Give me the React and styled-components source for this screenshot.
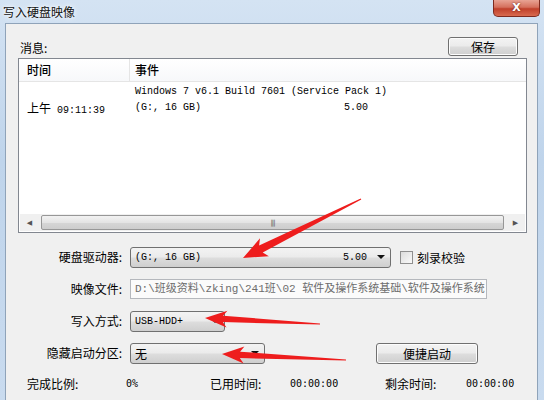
import React from "react"
import styled, { createGlobalStyle } from "styled-components"

const Global = createGlobalStyle`
  html, body { margin: 0; padding: 0; background: #c6d9ee; }
  body { font-family: "Noto Sans CJK SC", "Liberation Sans", sans-serif; font-size: 12px; color: #000; }
`

const Win = styled.div`
  position: relative;
  width: 544px;
  height: 400px;
  overflow: hidden;
  display: flex;
  flex-direction: column;
  background: linear-gradient(180deg, #d4e3f3 0%, #bfd4eb 40%, #c9dbef 100%);
`

const TitleBar = styled.div`
  height: 23px;
  display: flex;
  justify-content: space-between;
  align-items: flex-start;
  padding: 0 4px 0 3px;
  box-sizing: border-box;
`

const Title = styled.div`
  line-height: 23px;
  font-size: 12px;
  color: #111;
  text-shadow: 0 0 6px #fff, 0 0 3px #fff;
`

const CloseBtn = styled.div`
  width: 47px;
  height: 17px;
  box-sizing: border-box;
  border: 1px solid #7d2a1f;
  border-top: none;
  border-radius: 0 0 5px 5px;
  background: linear-gradient(180deg, #e8a394 0%, #d5705d 45%, #c0402b 55%, #d86a4f 100%);
  color: #fff;
  font-family: "DejaVu Sans", sans-serif;
  font-weight: bold;
  font-size: 11px;
  text-align: center;
  line-height: 15px;
  text-shadow: 0 0 2px #5a1a10;
`

const Body = styled.div`
  flex: 1;
  margin: 0 6px 0 5px;
  border: 1px solid #8fa3b9;
  border-bottom: none;
  background: #f0f0f0;
  padding: 0 10px 0 12px;
  display: flex;
  flex-direction: column;
`

const TopRow = styled.div`
  height: 34px;
  display: flex;
  justify-content: space-between;
  align-items: flex-end;
`

const MsgLabel = styled.div`
  margin: 0 0 2px 2px;
  line-height: 16px;
`

const Button = styled.div`
  width: ${p => p.$w}px;
  height: ${p => p.$h || 19}px;
  box-sizing: border-box;
  border: 1px solid #707070;
  border-radius: 3px;
  background: linear-gradient(180deg, #f3f3f3 0%, #ebebeb 48%, #dddddd 52%, #cfcfcf 100%);
  box-shadow: inset 0 0 0 1px #fcfcfc;
  text-align: center;
  line-height: ${p => (p.$h || 19) - 2}px;
  margin: ${p => p.$m || "0"};
  font-size: 12px;
`

const List = styled.div`
  height: 175px;
  box-sizing: border-box;
  border: 1px solid #828790;
  background: #fff;
  display: flex;
  flex-direction: column;
`

const ListHead = styled.div`
  height: 22px;
  display: grid;
  grid-template-columns: 111px 1fr;
  border-bottom: 1px solid #e5e5e5;
  background: linear-gradient(180deg, #ffffff 0%, #f7f8fa 100%);
`

const HeadCell = styled.div`
  padding-left: ${p => p.$pl}px;
  line-height: 22px;
  font-weight: 500;
  border-right: ${p => (p.$sep ? "1px solid #e5e5e5" : "none")};
`

const Rows = styled.div`
  flex: 1;
  display: grid;
  grid-template-columns: 111px 1fr;
  grid-template-rows: 16px 16px;
  align-content: start;
  padding-top: 2px;
  font-family: "Liberation Mono", monospace;
  font-size: 10px;
`

const TimeCell = styled.div`
  padding-left: 8px;
  line-height: 16px;
  grid-row: 2;
  white-space: nowrap;
  span { font-family: "Noto Sans CJK SC", sans-serif; font-size: 12px; margin-right: 6px; }
`

const EventCell = styled.div`
  padding-left: 5px;
  line-height: 16px;
  white-space: pre;
  display: flex;
  grid-column: 2;
`

const EvFirst = styled.span`
  width: 209px;
`

const ScrollBar = styled.div`
  height: 17px;
  display: flex;
  align-items: center;
  background: #f0f0f0;
  margin: 0 1px 1px 1px;
`

const ScrollArrow = styled.div`
  width: 19px;
  height: 17px;
  display: flex;
  align-items: center;
  justify-content: center;
  font-size: 7px;
  color: #555;
  font-family: "DejaVu Sans", sans-serif;
`

const Thumb = styled.div`
  flex: 1;
  height: 15px;
  margin: 0 2px;
  box-sizing: border-box;
  border: 1px solid #979797;
  border-radius: 2px;
  background: linear-gradient(180deg, #f2f2f2 0%, #e4e4e4 50%, #d6d6d6 51%, #cdcdcd 100%);
  display: flex;
  align-items: center;
  justify-content: center;
  font-family: "DejaVu Sans", sans-serif;
  font-size: 7px;
  letter-spacing: -1px;
  color: #555;
`

const Form = styled.div`
  margin-top: 13px;
  display: grid;
  grid-template-columns: 104px 1fr;
  grid-auto-rows: 22px;
  column-gap: 8px;
  row-gap: 10px;
`

const Label = styled.div`
  text-align: right;
  line-height: 22px;
  color: #000;
`

const Field = styled.div`
  display: flex;
  align-items: center;
`

const Combo = styled.div`
  width: ${p => p.$w}px;
  height: 21px;
  box-sizing: border-box;
  border: 1px solid #707070;
  border-radius: 3px;
  background: linear-gradient(180deg, #f3f3f3 0%, #ebebeb 48%, #dddddd 52%, #cfcfcf 100%);
  display: flex;
  align-items: center;
  padding: 0 5px 0 4px;
  font-family: "Liberation Mono", monospace;
  font-size: 10px;
  white-space: pre;
`

const ComboText = styled.span`
  flex: 1;
  font-family: ${p => (p.$cjk ? '"Noto Sans CJK SC", sans-serif' : "inherit")};
  font-size: ${p => (p.$cjk ? 12 : 10)}px;
`

const DropArrow = styled.span`
  width: 0;
  height: 0;
  border-left: 4px solid transparent;
  border-right: 4px solid transparent;
  border-top: 4px solid #111;
  margin-left: 10px;
`

const Input = styled.div`
  width: 357px;
  height: 20px;
  box-sizing: border-box;
  border: 1px solid #b5b8bd;
  background: #fbfbfb;
  color: #6d6d6d;
  padding-left: 4px;
  line-height: 18px;
  white-space: nowrap;
  overflow: hidden;
  font-size: 11px;
  font-family: "Liberation Mono", "Noto Sans CJK SC", monospace;
`

const Check = styled.span`
  width: 11px;
  height: 11px;
  border: 1px solid #8f8f8f;
  background: linear-gradient(135deg, #dcdcdc, #fafafa);
  margin: 0 4px 0 9px;
`

const Stats = styled.div`
  margin-top: 10px;
  padding-left: 9px;
  display: grid;
  grid-template-columns: 99px 84px 80px 95px 81px 1fr;
  line-height: 20px;
`

const Val = styled.div`
  font-family: "DejaVu Sans Mono", monospace;
  font-size: 10px;
`

const Overlay = styled.svg`
  position: absolute;
  left: 0;
  top: 0;
  pointer-events: none;
`

const arrows = [
  { tail: [361, 199], tip: [243, 258], head: 20, wing: 10, neck: 4 },
  { tail: [320, 324], tip: [205, 318], head: 18, wing: 8.5, neck: 3.2 },
  { tail: [346, 360], tip: [222, 354], head: 18, wing: 8.5, neck: 3.2 },
]

function arrowPoints({ tail, tip, head, wing, neck }) {
  const dx = tip[0] - tail[0], dy = tip[1] - tail[1]
  const len = Math.hypot(dx, dy)
  const ux = dx / len, uy = dy / len
  const nx = -uy, ny = ux
  const p = (bx, by, a, b) => [bx - ux * a + nx * b, by - uy * a + ny * b]
  const pts = [
    tip,
    p(tip[0], tip[1], head + 4, wing),
    p(tip[0], tip[1], head, neck),
    p(tail[0], tail[1], 0, 0.6),
    p(tail[0], tail[1], 0, -0.6),
    p(tip[0], tip[1], head, -neck),
    p(tip[0], tip[1], head + 4, -wing),
  ]
  return pts.map(q => q.map(v => v.toFixed(1)).join(",")).join(" ")
}

export default function App() {
  return (
    <Win>
      <Global />
      <TitleBar>
        <Title>写入硬盘映像</Title>
        <CloseBtn>X</CloseBtn>
      </TitleBar>
      <Body>
        <TopRow>
          <MsgLabel>消息:</MsgLabel>
          <Button $w={70} $m="0 9px 2px 0">保存</Button>
        </TopRow>
        <List>
          <ListHead>
            <HeadCell $pl={8} $sep>时间</HeadCell>
            <HeadCell $pl={5}>事件</HeadCell>
          </ListHead>
          <Rows>
            <EventCell>Windows 7 v6.1 Build 7601 (Service Pack 1)</EventCell>
            <TimeCell><span>上午</span>09:11:39</TimeCell>
            <EventCell><EvFirst>(G:, 16 GB)</EvFirst><span>5.00</span></EventCell>
          </Rows>
          <ScrollBar>
            <ScrollArrow>◀</ScrollArrow>
            <Thumb>|||</Thumb>
            <ScrollArrow>▶</ScrollArrow>
          </ScrollBar>
        </List>
        <Form>
          <Label>硬盘驱动器:</Label>
          <Field>
            <Combo $w={261}>
              <ComboText>(G:, 16 GB)</ComboText>
              <span>5.00</span>
              <DropArrow />
            </Combo>
            <Check />
            <span>刻录校验</span>
          </Field>
          <Label>映像文件:</Label>
          <Field>
            <Input>D:\班级资料\zking\241班\02 软件及操作系统基础\软件及操作系统</Input>
          </Field>
          <Label>写入方式:</Label>
          <Field>
            <Combo $w={95}>
              <ComboText>USB-HDD+</ComboText>
              <DropArrow />
            </Combo>
          </Field>
          <Label>隐藏启动分区:</Label>
          <Field>
            <Combo $w={135}>
              <ComboText $cjk>无</ComboText>
              <DropArrow />
            </Combo>
            <Button $w={102} $h={21} $m="0 0 0 111px">便捷启动</Button>
          </Field>
        </Form>
        <Stats>
          <div>完成比例:</div>
          <Val>0%</Val>
          <div>已用时间:</div>
          <Val>00:00:00</Val>
          <div>剩余时间:</div>
          <Val>00:00:00</Val>
        </Stats>
      </Body>
      <Overlay width="544" height="400" viewBox="0 0 544 400">
        {arrows.map((a, i) => (
          <polygon key={i} points={arrowPoints(a)} fill="#ee1d1d" />
        ))}
      </Overlay>
    </Win>
  )
}
